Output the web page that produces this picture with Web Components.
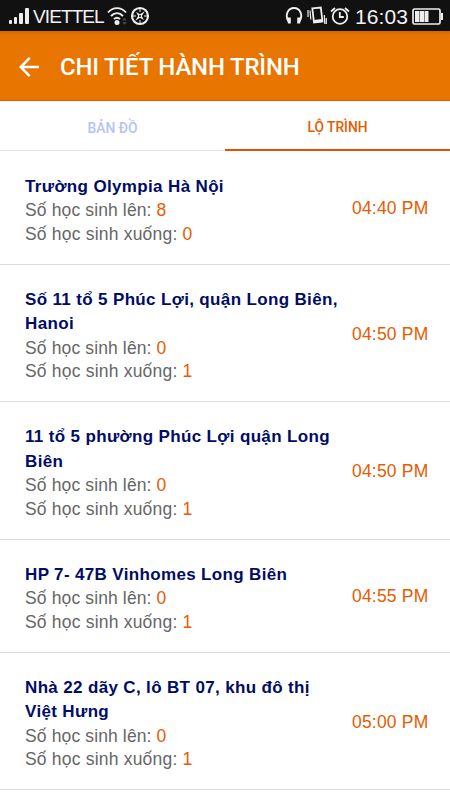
<!DOCTYPE html>
<html lang="vi">
<head>
<meta charset="utf-8">
<title>Chi tiết hành trình</title>
<style>
    body {
        margin: 0;
        background: #fff;
        font-family: "Liberation Sans", Arial, sans-serif;
        overflow: hidden;
    }
</style>
</head>
<body>
<journey-screen></journey-screen>

<script>
class StatusBar extends HTMLElement {
    connectedCallback() {
        const shadowRoot = this.attachShadow({ mode: 'open' });
        shadowRoot.innerHTML = `
        <style>
            :host {
                display: flex;
                align-items: center;
                justify-content: space-between;
                box-sizing: border-box;
                height: 31px;
                padding: 1px 7px 0 8px;
                background: #111;
                color: #f2f2f2;
            }
            .group {
                display: flex;
                align-items: center;
            }
            svg {
                display: block;
                fill: none;
                stroke: #eee;
            }
            .carrier {
                font-size: 19px;
                letter-spacing: -0.9px;
                margin: 2px 3px 0 4px;
            }
            .clock {
                font-size: 21px;
                letter-spacing: 0.1px;
                margin: 1px 4px 0 5px;
            }
        </style>
        <div class="group">
            <svg width="21" height="18" viewBox="0 0 21 18">
                <g fill="#eee" stroke="none">
                    <rect x="1" y="13" width="3" height="4" rx="1"/>
                    <rect x="6" y="10" width="3" height="7" rx="1"/>
                    <rect x="11" y="6" width="4" height="11" rx="1"/>
                    <rect x="17" y="1" width="4" height="16" rx="1"/>
                </g>
            </svg>
            <span class="carrier">VIETTEL</span>
            <svg width="20" height="20" viewBox="0 0 20 20" stroke-width="1.9">
                <path d="M1 6.500C6 .6 14 .6 19 6.500M4 10c3.500-3.800 8.500-3.800 12 0M7 13.200c1.800-1.800 4.200-1.800 6 0"/>
                <circle cx="10" cy="16.500" r="2.500" fill="#eee" stroke="none"/>
                <path d="M15.200 14.500l2.300-3 2.300 3zM15.200 16l2.300 3 2.300-3z" fill="#444" stroke="none"/>
            </svg>
            <svg width="20" height="20" viewBox="0 0 20 20" style="margin-left: 3px">
                <circle cx="10" cy="10" r="8" stroke-width="2.200"/>
                <path d="M10 3.300l1.300 5.400L15.500 10l-4.200 1.300L10 16.700l-1.300-5.400L4.500 10l4.200-1.300z" fill="#eee" stroke="none" transform="rotate(45 10 10)"/>
                <path d="M10 3v3M10 14v3M3 10h3M14 10h3" stroke-width="1"/>
                <circle cx="10" cy="10" r="1" fill="#111" stroke="none"/>
            </svg>
        </div>
        <div class="group">
            <svg width="18" height="20" viewBox="0 0 18 20">
                <path d="M3.500 15.500C-.5 9 3 2 9 2s9.500 7 5.500 13.500" stroke-width="1.900"/>
                <path d="M4.300 11.500v6M13.700 11.500v6" stroke-width="3"/>
            </svg>
            <svg width="20" height="20" viewBox="0 0 20 20" style="margin-left: 4px">
                <path d="M5.300 2.300l8.500-.8 1.700 14-8.500 1z" stroke-width="1.800"/>
                <path d="M6.500 14l8.500-1 .5 3-8.500 1z" fill="#eee" stroke="none"/>
                <path d="M1 4v7M3 4.500l.8 9M17.300 9l.5 9M19.300 12v6" stroke-width="1.200"/>
            </svg>
            <svg width="20" height="20" viewBox="0 0 20 20" style="margin-left: 3px">
                <circle cx="10" cy="10.500" r="7.300" stroke-width="1.800"/>
                <path d="M9.800 6v5h4M1 5.500L5 2M15 2l4 3.500" stroke-width="1.800"/>
            </svg>
            <span class="clock">16:03</span>
            <svg width="31" height="17" viewBox="0 0 31 17">
                <rect x="1" y="1" width="27" height="15" rx="1.500" stroke-width="1.700"/>
                <path d="M30 5v7" stroke-width="2"/>
                <path d="M3 3h4.500v11H3zM8 3h4v11H8zM12.500 3h4v11h-4z" fill="#eee" stroke="none"/>
            </svg>
        </div>
        `;
    }
}

class AppHeader extends HTMLElement {
    connectedCallback() {
        const shadowRoot = this.attachShadow({ mode: 'open' });
        shadowRoot.innerHTML = `
        <style>
            :host {
                display: flex;
                align-items: center;
                box-sizing: border-box;
                height: 70px;
                padding: 2px 19px 0;
                background: linear-gradient(#d06800, #e87500 5px);
                border-bottom: 1px solid #e65c00;
                color: #fff;
            }
            h1 {
                margin: 0 0 0 21px;
                font: 500 24px Roboto, sans-serif;
                letter-spacing: -0.2px;
                white-space: nowrap;
            }
        </style>
        <svg width="20" height="20" viewBox="0 0 20 20" fill="none" stroke="#fff" stroke-width="2.500">
            <path d="M10.700.9L1.700 10l9 9.100M2 10h18"/>
        </svg>
        <h1><slot></slot></h1>
        `;
    }
}

class TabItem extends HTMLElement {
    connectedCallback() {
        const shadowRoot = this.attachShadow({ mode: 'open' });
        shadowRoot.innerHTML = `
        <style>
            :host {
                display: flex;
                flex: 1;
                align-items: center;
                justify-content: center;
                box-sizing: border-box;
                height: 50px;
                padding-top: 4px;
                border-bottom: 1px solid #e4e4e4;
                color: #b3c3f5;
                font: 500 13.800px Roboto, sans-serif;
            }
            :host([active]) {
                padding-top: 3px;
                border-bottom: 2px solid #e65100;
                color: #e65c00;
            }
        </style>
        <slot></slot>
        `;
    }
}

class RouteStop extends HTMLElement {
    connectedCallback() {
        const shadowRoot = this.attachShadow({ mode: 'open' });
        shadowRoot.innerHTML = `
        <style>
            :host {
                display: flex;
                align-items: center;
                box-sizing: border-box;
                padding: 23.100px 0 16.900px 25px;
                border-bottom: 1px solid #dcdcdc;
                font-size: 17.500px;
                line-height: 23.750px;
                color: #666;
            }
            .info {
                width: 327px;
                white-space: nowrap;
            }
            .name {
                color: #000c66;
                font-size: 17px;
                font-weight: bold;
                line-height: 24.500px;
                letter-spacing: 0.35px;
            }
            .count {
                letter-spacing: 0.13px;
            }
            .count:last-child {
                letter-spacing: 0.2px;
            }
            b, time {
                color: #e65c00;
                font-weight: normal;
            }
            time {
                margin-bottom: 3px;
                letter-spacing: 0.2px;
                white-space: nowrap;
            }
        </style>
        <div class="info">
            <div class="name"><slot></slot></div>
            <div class="count">Số học sinh lên: <b>${this.getAttribute('up')}</b></div>
            <div class="count">Số học sinh xuống: <b>${this.getAttribute('down')}</b></div>
        </div>
        <time>${this.getAttribute('time')}</time>
        `;
    }
}

class JourneyScreen extends HTMLElement {
    connectedCallback() {
        const shadowRoot = this.attachShadow({ mode: 'open' });
        shadowRoot.innerHTML = `
        <style>
            :host {
                display: block;
                width: 450px;
                height: 800px;
                overflow: hidden;
            }
            nav {
                display: flex;
            }
            main {
                padding-top: 0.6px;
            }
        </style>
        <status-bar></status-bar>
        <app-header>CHI TIẾT HÀNH TRÌNH</app-header>
        <nav>
            <tab-item>BẢN ĐỒ</tab-item>
            <tab-item active>LỘ TRÌNH</tab-item>
        </nav>
        <main>
            <route-stop up="8" down="0" time="04:40 PM">Trường Olympia Hà Nội</route-stop>
            <route-stop up="0" down="1" time="04:50 PM">Số 11 tổ 5 Phúc Lợi, quận Long Biên,<br>Hanoi</route-stop>
            <route-stop up="0" down="1" time="04:50 PM">11 tổ 5 phường Phúc Lợi quận Long<br>Biên</route-stop>
            <route-stop up="0" down="1" time="04:55 PM">HP 7- 47B Vinhomes Long Biên</route-stop>
            <route-stop up="0" down="1" time="05:00 PM">Nhà 22 dãy C, lô BT 07, khu đô thị<br>Việt Hưng</route-stop>
        </main>
        `;
    }
}

customElements.define("status-bar", StatusBar);
customElements.define("app-header", AppHeader);
customElements.define("tab-item", TabItem);
customElements.define("route-stop", RouteStop);
customElements.define("journey-screen", JourneyScreen);
</script>
</body>
</html>
